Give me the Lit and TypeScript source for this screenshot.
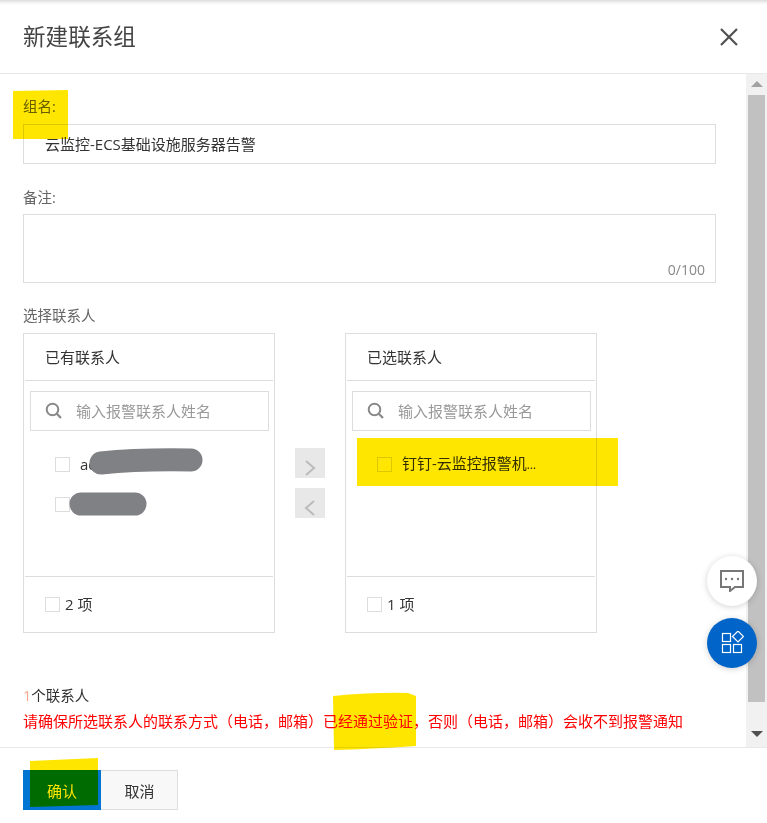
import { LitElement, html, css, svg } from "lit";
import { customElement } from "lit/decorators.js";

const searchIcon = svg`<svg class="sicon" width="18" height="18" viewBox="0 0 18 18"><circle cx="7.5" cy="7.5" r="5.8" fill="none" stroke="#888" stroke-width="2"/><path d="M11.8 11.8L16 16" stroke="#888" stroke-width="2.2" fill="none"/></svg>`;

@customElement("app-root")
export class AppRoot extends LitElement {
  static styles = css`
    :host { display: block; position: relative; width: 767px; height: 823px; overflow: hidden; background: #fff;
      font-family: "Open Sans", "Noto Sans CJK SC", sans-serif; font-size: 15px; line-height: 20px; color: #333; }
    .page { display: flex; flex-direction: column; height: 823px; }
    .head { flex: none; height: 73px; border-bottom: 1px solid #e8e8e8; display: flex; align-items: center; justify-content: space-between;
      padding: 0 28px 0 23px; background: linear-gradient(#dcdcdc 0, #f6f6f6 3px, #fff 5px); }
    .title { font-size: 22.6px; color: #444; line-height: 30px; }
    .close { display: block; }
    .mid { flex: none; height: 673px; display: flex; }
    .form { flex: 1; min-width: 0; padding: 22px 30px 0 23px; }
    .label { height: 20px; line-height: 22px; color: #666; font-size: 14.5px; margin-bottom: 8px; }
    .label.ta { margin-top: 23px; margin-bottom: 7px; }
    .label.sel { margin-top: 22px; }
    .input { height: 40px; box-sizing: border-box; border: 1px solid #ddd; padding: 0 21px; display: flex; align-items: center; color: #333; }
    .area { height: 69px; box-sizing: border-box; border: 1px solid #ddd; display: flex; align-items: flex-end; justify-content: flex-end; padding: 0 10px 2px 0; color: #888; font-size: 14px; line-height: 20px; }
    .transfer { display: flex; height: 300px; }
    .panel { width: 252px; height: 300px; box-sizing: border-box; border: 1px solid #ddd; display: flex; flex-direction: column; }
    .phead { flex: none; height: 46px; margin: 0 1px; border-bottom: 1px solid #ddd; padding: 0 20px; display: flex; align-items: center; color: #333; }
    .pbody { flex: 1; padding: 10px 5px 0 6px; }
    .search { height: 40px; box-sizing: border-box; border: 1px solid #ddd; display: flex; align-items: center; padding-left: 14px; color: #999; }
    .sicon { margin-right: 13px; flex: none; }
    .rows { padding: 13px 0 0 25px; }
    .row { height: 40.5px; display: flex; align-items: center; gap: 10px; color: #333; white-space: nowrap; }
    .dots { font-size: 12px; }
    .check { flex: none; width: 15px; height: 15px; box-sizing: border-box; border: 1px solid #ddd; background: #fff; }
    .pfoot { flex: none; height: 55px; margin: 0 1px; border-top: 1px solid #ddd; display: flex; align-items: center; gap: 5px; padding-left: 20px; color: #333; }
    .ft { margin-bottom: 2px; }
    .arrows { width: 70px; display: flex; flex-direction: column; align-items: center; padding-top: 115px; gap: 10px; }
    .arrow { width: 30px; height: 30px; box-sizing: border-box; padding-top: 9px; background: #e8e8e8; display: flex; align-items: center; justify-content: center; }
    .count { margin-top: 52px; height: 20px; line-height: 22px; font-size: 14.5px; color: #333; }
    .count span { color: #f9a88e; }
    .warn { margin-top: 5px; height: 20px; line-height: 22px; color: #f00; white-space: nowrap; }
    .bar { flex: none; width: 19px; padding-left: 2px; background: #f1f1f1; display: flex; flex-direction: column; align-items: flex-start; }
    .tri { flex: none; width: 17px; height: 21px; display: flex; align-items: center; justify-content: center; }
    .thumb { flex: none; width: 17px; height: 607px; background: #c1c1c1; }
    .down { margin-top: auto; height: 25px; }
    .foot { flex: none; border-top: 1px solid #e8e8e8; padding: 22px 0 0 23px; display: flex; }
    .btn { height: 40px; box-sizing: border-box; padding-top: 2px; display: flex; align-items: center; justify-content: center; }
    .ok { width: 78px; background: #0076d2; color: #fff; }
    .cancel { width: 77px; padding-left: 1px; background: #f8f8f8; border: 1px solid #ddd; border-left: none; color: #333; }
    .fab { position: absolute; left: 707px; width: 50px; height: 50px; border-radius: 50%; display: flex; align-items: center; justify-content: center; box-shadow: 0 1px 6px rgba(0,0,0,.18); }
    .fab.chat { top: 556px; background: #fff; }
    .fab.apps { top: 618px; background: #0064c8; }
    .marks { position: absolute; left: 0; top: 0; pointer-events: none; }
    .marks.hl { mix-blend-mode: multiply; }
  `;

  private panel(title: string, rows: unknown, foot: string) {
    return html`<div class="panel">
      <div class="phead">${title}</div>
      <div class="pbody">
        <div class="search">${searchIcon}输入报警联系人姓名</div>
        <div class="rows">${rows}</div>
      </div>
      <div class="pfoot"><span class="check"></span><span class="ft">${foot}</span></div>
    </div>`;
  }

  render() {
    return html`
      <div class="page">
        <div class="head">
          <div class="title">新建联系组</div>
          <svg class="close" width="20" height="20" viewBox="0 0 20 20"><path d="M2 2L18 18M18 2L2 18" stroke="#505050" stroke-width="2.2" fill="none"/></svg>
        </div>
        <div class="mid">
          <div class="form">
            <div class="label">组名:</div>
            <div class="input">云监控-ECS基础设施服务器告警</div>
            <div class="label ta">备注:</div>
            <div class="area">0/100</div>
            <div class="label sel">选择联系人</div>
            <div class="transfer">
              ${this.panel("已有联系人", html`
                <div class="row"><span class="check"></span>ad</div>
                <div class="row"><span class="check"></span></div>`, "2 项")}
              <div class="arrows">
                <div class="arrow"><svg width="12" height="18" viewBox="0 0 12 18"><path d="M2 2L10 9L2 16" stroke="#bbb" stroke-width="2" fill="none"/></svg></div>
                <div class="arrow"><svg width="12" height="18" viewBox="0 0 12 18"><path d="M10 2L2 9L10 16" stroke="#bbb" stroke-width="2" fill="none"/></svg></div>
              </div>
              ${this.panel("已选联系人", html`
                <div class="row"><span class="check"></span><span>钉钉-云监控报警机<span class="dots">…</span></span></div>`, "1 项")}
            </div>
            <div class="count"><span>1</span>个联系人</div>
            <div class="warn">请确保所选联系人的联系方式（电话，邮箱）已经通过验证，否则（电话，邮箱）会收不到报警通知</div>
          </div>
          <div class="bar">
            <div class="tri"><svg width="12" height="7" viewBox="0 0 12 7"><path d="M6 0L12 6H0Z" fill="#a3a3a3"/></svg></div>
            <div class="thumb"></div>
            <div class="tri down"><svg width="12" height="7" viewBox="0 0 12 7"><path d="M0 0H12L6 6Z" fill="#505050"/></svg></div>
          </div>
        </div>
        <div class="foot">
          <div class="btn ok">确认</div>
          <div class="btn cancel">取消</div>
        </div>
      </div>

      <svg class="marks" width="767" height="823" viewBox="0 0 767 823">
        <path d="M101 463Q140 459 191 460" stroke="#808184" stroke-width="23" stroke-linecap="round" fill="none"/>
        <path d="M81 504H135" stroke="#808184" stroke-width="23" stroke-linecap="round" fill="none"/>
      </svg>
      <svg class="marks hl" width="767" height="823" viewBox="0 0 767 823">
        <path d="M13 91L68 90V139H13Z" fill="#ffe600"/>
        <path d="M357 438H618V486H357Z" fill="#ffe600"/>
        <path d="M333 696Q375 692 408 693L416 696V746Q370 749 334 750Z" fill="#ffe600"/>
        <path d="M30 761L98 758V805L30 807Z" fill="#ffe600"/>
      </svg>

      <div class="fab chat">
        <svg width="24" height="22" viewBox="0 0 24 22"><path d="M1 1H23V17H15L10 21V17H1Z" fill="none" stroke="#777" stroke-width="2"/><circle cx="6" cy="9" r="1.2" fill="#777"/><circle cx="12" cy="9" r="1.2" fill="#777"/><circle cx="18" cy="9" r="1.2" fill="#777"/></svg>
      </div>
      <div class="fab apps">
        <svg width="24" height="24" viewBox="0 0 24 24" fill="none" stroke="#fff" stroke-width="1.2"><rect x="2.5" y="2.5" width="8" height="8"/><rect x="2.5" y="13.5" width="8" height="8"/><rect x="13.5" y="13.5" width="8" height="8"/><path d="M18 0L23.5 5.5L18 11L12.5 5.5Z"/></svg>
      </div>
    `;
  }
}
